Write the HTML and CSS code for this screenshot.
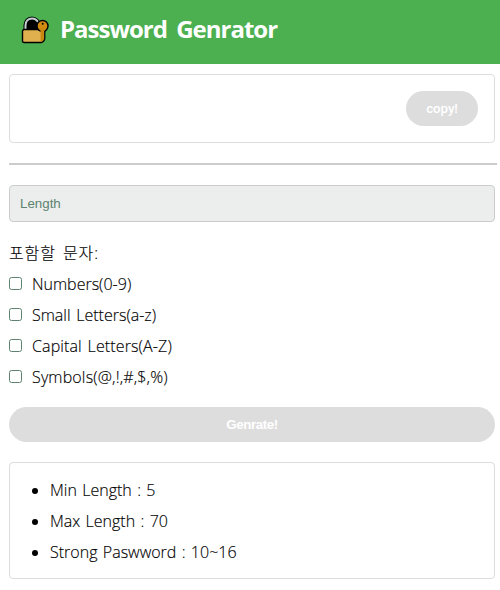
FILE: index.html
```html
<!DOCTYPE html>
<html lang="ko">
<head>
<meta charset="utf-8">
<title>Password Genrator</title>
<link rel="stylesheet" href="styles.css">
</head>
<body>
<header class="header">
  <svg class="logo" width="28" height="28" viewBox="0 0 28 28" aria-hidden="true">
    <path d="M2.500 14V9Q3 1 11 .500Q18 1 20 8V14Z" fill="#000"/>
    <path d="M4.500 13V9.500C4.500 5 7.500 2.500 11 2.500C14 2.500 15.500 3.500 17 6" fill="none" stroke="#c5d0d5" stroke-width="2"/>
    <path d="M2.500 13.500H22V23Q22 26.500 20 26.500H3Q1.500 26.500 1.500 25V15Z" fill="#e0b04e" stroke="#000" stroke-width="1.400"/>
    <circle cx="21.500" cy="10" r="5.500" fill="#d08a10" stroke="#000" stroke-width="1.400"/>
    <path d="M19.500 12H23.500V23L21.500 25.800H19.500Z" fill="#c98710"/>
    <path d="M23.800 15V23Q23.500 25 21.500 26.300" fill="none" stroke="#000" stroke-width="1.200"/>
    <circle cx="21.700" cy="7.800" r="1" fill="#000"/>
  </svg>
  <h1 class="title">Password Genrator</h1>
</header>
<main class="main">
  <section class="result"><button class="button copy" type="button">copy!</button></section>
  <hr class="divider">
  <input class="length" type="text" placeholder="Length">
  <div class="options">
    <p class="row heading">포함할 문자:</p>
    <label class="row"><input class="check" type="checkbox"><span class="numbers">Numbers(0-9)</span></label>
    <label class="row"><input class="check" type="checkbox"><span class="small">Small Letters(a-z)</span></label>
    <label class="row"><input class="check" type="checkbox"><span class="capital">Capital Letters(A-Z)</span></label>
    <label class="row"><input class="check" type="checkbox"><span class="symbols">Symbols(@,!,#,$,%)</span></label>
  </div>
  <button class="button generate" type="button">Genrate!</button>
  <ul class="tips">
    <li>Min Length : 5</li>
    <li>Max Length : 70</li>
    <li>Strong Paswword : 10~16</li>
  </ul>
</main>
</body>
</html>
```
FILE: styles.css
```css
* { box-sizing: border-box; }
body {
  margin: 0;
  background: #fff;
  color: #000;
  font: 300 16px/31px "Open Sans", "Noto Sans CJK KR", sans-serif;
  word-spacing: 1.5px;
  -webkit-text-stroke: 0.15px currentColor;
}
.header {
  display: flex;
  align-items: center;
  height: 64px;
  padding: 0 21px 4px;
  background: #4caf50;
}
.logo { flex: none; }
.title {
  position: relative;
  top: -1px;
  margin: 0 0 0 11px;
  color: #fff;
  font-size: 24px;
  font-weight: 700;
  line-height: 32px;
  letter-spacing: -1px;
  word-spacing: 4px;
  -webkit-text-stroke: 0;
}
.main { padding: 10px 5px 0 9px; }
.result {
  display: flex;
  justify-content: flex-end;
  height: 69px;
  padding: 16px;
  border: 1px solid #ddd;
  border-radius: 4px;
}
.button {
  display: block;
  height: 35px;
  padding: 0;
  border: 0;
  border-radius: 20px;
  background: #ddd;
  color: #fff;
  font: 700 13.333px "Liberation Sans", sans-serif;
  letter-spacing: -0.4px;
  -webkit-text-stroke: 0;
}
.copy {
  width: 72px;
  font-family: Roboto, sans-serif;
  font-weight: 500;
  letter-spacing: -0.1px;
}
.divider {
  height: 2px;
  margin: 20px -2px 20px 0;
  border: 0;
  background: #ccc;
}
.length {
  display: block;
  width: 100%;
  height: 37px;
  padding: 0 10px;
  border: 1px solid #ccc;
  border-radius: 4px;
  background: #ebeeed;
  font: 13.333px "Liberation Sans", sans-serif;
  -webkit-text-stroke: 0;
}
.length::placeholder { color: #5d8270; }
.options { margin-top: 16px; }
.row {
  display: flex;
  align-items: center;
  height: 31px;
  margin: 0;
  white-space: nowrap;
}
.heading {
  letter-spacing: 0.9px;
  word-spacing: 2px;
}
.capital { letter-spacing: 0.12px; }
.symbols { letter-spacing: 0.15px; }
.check {
  appearance: none;
  width: 13px;
  height: 13px;
  margin: 0 10px 2px 0;
  border: 1px solid #5d8270;
  border-radius: 2.5px;
  background: #fff;
}
.generate {
  width: 100%;
  margin: 14px 0 20px;
}
.tips {
  height: 117px;
  margin: 0;
  padding: 12px 16px 12px 40px;
  border: 1px solid #ddd;
  border-radius: 4px;
  word-spacing: 1.2px;
}
```
